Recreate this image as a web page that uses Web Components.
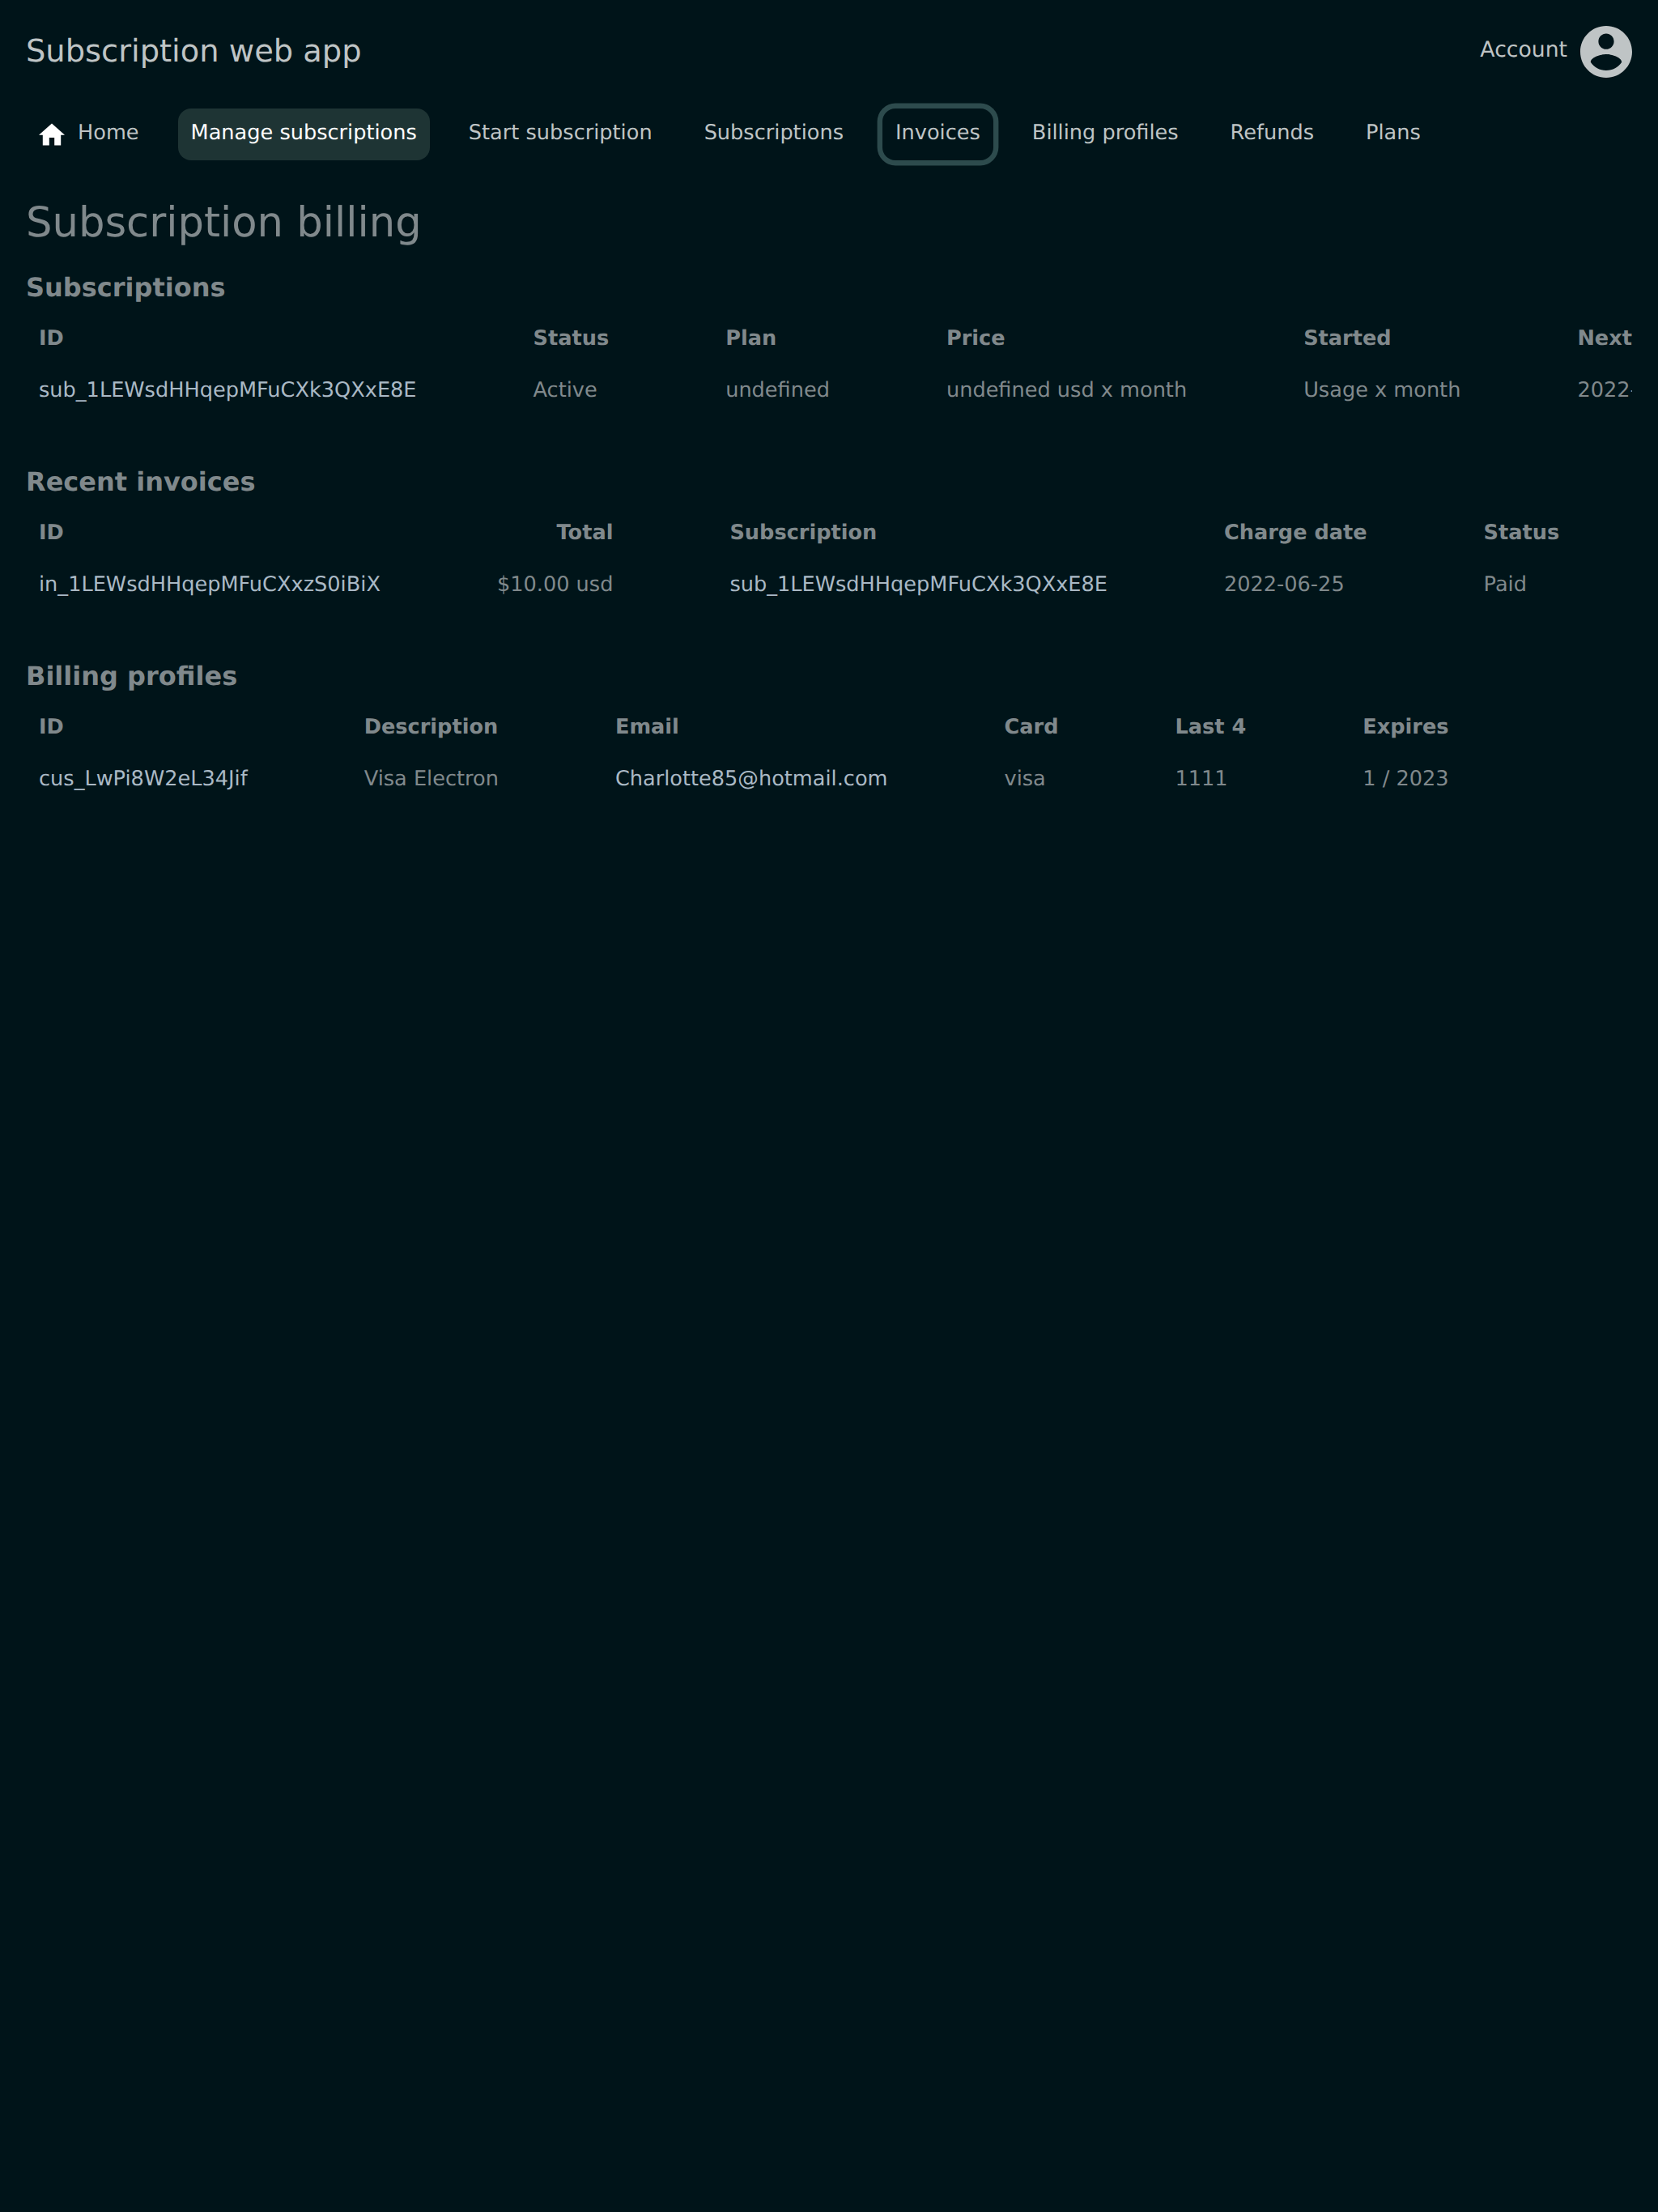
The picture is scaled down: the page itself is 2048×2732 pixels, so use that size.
<!DOCTYPE html>
<html lang="en">
<head>
<meta charset="utf-8">
<title>Subscription web app</title>
<style>
html{font-size:32px}
body{margin:0;background:#001419;color:#80898c;font:25.6px/32px "DejaVu Sans",sans-serif;text-rendering:geometricPrecision;--strong:#bfc4c5;--link:#aab9c5;--active:#1e3434;--ring:#2d4b4d}
</style>
</head>
<body>
<billing-app></billing-app>
<script>
const define = (name, html, setup) => {
  const template = document.createElement('template');
  template.innerHTML = html;
  customElements.define(name, class extends HTMLElement {
    constructor() {
      super();
      this.attachShadow({ mode: 'open' }).append(template.content.cloneNode(true));
    }
    connectedCallback() { if (setup) setup(this, this.shadowRoot); }
  });
};

define('account-icon', `<style>:host{display:block;width:64px;height:64px}svg{display:block;width:100%;height:100%}</style>
<svg viewBox="2 2 20 20" fill="#bfc4c5"><path d="M12 2C6.48 2 2 6.48 2 12s4.48 10 10 10 10-4.48 10-10S17.52 2 12 2zm0 3c1.66 0 3 1.34 3 3s-1.34 3-3 3-3-1.34-3-3 1.34-3 3-3zm0 14.2c-2.5 0-4.71-1.28-6-3.22.03-1.99 4-3.08 6-3.08 1.99 0 5.97 1.09 6 3.08-1.29 1.94-3.5 3.22-6 3.22z"/></svg>`);

define('home-icon', `<style>:host{display:block;width:32px;height:32px}svg{display:block;width:100%;height:100%}</style>
<svg viewBox="2 1.5 20 20" fill="#fff"><path d="M10 20v-6h4v6h5v-8h3L12 3 2 12h3v8z"/></svg>`);

define('app-header', `<style>
:host{display:flex;justify-content:space-between;align-items:center;height:64px;padding:32px 32px 0;color:var(--strong)}
.title{font-size:38.4px;line-height:48px}
.account{display:flex;align-items:center;gap:16px}
.label{padding-bottom:4px;font-size:26.667px}
</style><div class="title"><slot></slot></div><div class="account"><div class="label"><slot name="account"></slot></div><account-icon></account-icon></div>`);

define('nav-bar', `<style>:host{display:flex;gap:32px;padding:38px 32px 0}</style><slot></slot>`);

define('nav-item', `<style>
:host{display:flex;align-items:center;gap:16px;height:64px;box-sizing:border-box;padding:0 16px;border-radius:16px;color:var(--strong);white-space:nowrap}
:host([active]){background:var(--active);color:#fff}
:host([focused]){box-shadow:0 0 0 6.4px var(--ring)}
.label{padding-bottom:4px}
</style><slot name="icon"></slot><div class="label"><slot></slot></div>`);

define('data-cell', `<style>
:host{display:block;height:64px;line-height:64px;white-space:nowrap}
:host([head]){font-weight:bold}
:host([link]){color:var(--link)}
:host([end]){text-align:right}
</style><slot></slot>`);

define('data-table', `<style>
:host{display:block;margin-bottom:49px}
h2{margin:0;font-size:32px;line-height:64px;height:63px;font-weight:bold}
.grid{display:grid;grid-template-columns:repeat(var(--cols),max-content);column-gap:144px;padding-left:16px;overflow:hidden}
</style><h2></h2><div class="grid"><slot></slot></div>`, (host, root) => {
  root.querySelector('h2').textContent = host.getAttribute('heading');
  root.querySelector('.grid').style.setProperty('--cols', host.getAttribute('columns'));
});

define('billing-app', `<style>
:host{display:block;min-height:2732px;overflow:hidden}
main{display:block;padding:41px 32px 0}
h1{margin:0 0 12px;font-size:51.2px;line-height:72px;font-weight:normal}
</style>
<app-header>Subscription web app<span slot="account">Account</span></app-header>
<nav-bar>
<nav-item><home-icon slot="icon"></home-icon>Home</nav-item>
<nav-item active>Manage subscriptions</nav-item>
<nav-item>Start subscription</nav-item>
<nav-item>Subscriptions</nav-item>
<nav-item focused>Invoices</nav-item>
<nav-item>Billing profiles</nav-item>
<nav-item>Refunds</nav-item>
<nav-item>Plans</nav-item>
</nav-bar>
<main>
<h1>Subscription billing</h1>
<data-table heading="Subscriptions" columns="6">
<data-cell head>ID</data-cell><data-cell head>Status</data-cell><data-cell head>Plan</data-cell><data-cell head>Price</data-cell><data-cell head>Started</data-cell><data-cell head>Next</data-cell>
<data-cell link>sub_1LEWsdHHqepMFuCXk3QXxE8E</data-cell><data-cell>Active</data-cell><data-cell>undefined</data-cell><data-cell>undefined usd x month</data-cell><data-cell>Usage x month</data-cell><data-cell>2022-</data-cell>
</data-table>
<data-table heading="Recent invoices" columns="5">
<data-cell head>ID</data-cell><data-cell head end>Total</data-cell><data-cell head>Subscription</data-cell><data-cell head>Charge date</data-cell><data-cell head>Status</data-cell>
<data-cell link>in_1LEWsdHHqepMFuCXxzS0iBiX</data-cell><data-cell end>$10.00 usd</data-cell><data-cell link>sub_1LEWsdHHqepMFuCXk3QXxE8E</data-cell><data-cell>2022-06-25</data-cell><data-cell>Paid</data-cell>
</data-table>
<data-table heading="Billing profiles" columns="6">
<data-cell head>ID</data-cell><data-cell head>Description</data-cell><data-cell head>Email</data-cell><data-cell head>Card</data-cell><data-cell head>Last 4</data-cell><data-cell head>Expires</data-cell>
<data-cell link>cus_LwPi8W2eL34Jif</data-cell><data-cell>Visa Electron</data-cell><data-cell link>Charlotte85@hotmail.com</data-cell><data-cell>visa</data-cell><data-cell>1111</data-cell><data-cell>1 / 2023</data-cell>
</data-table>
</main>`);
</script>
</body>
</html>
